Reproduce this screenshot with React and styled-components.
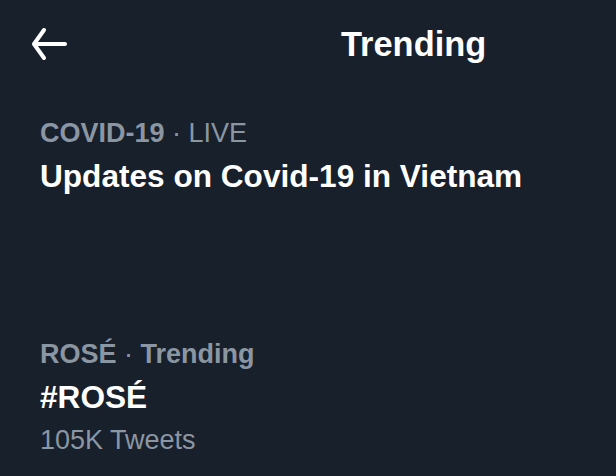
import React from 'react'
import styled, {createGlobalStyle} from 'styled-components'

const GlobalStyle = createGlobalStyle`
    html, body {
        margin: 0;
        padding: 0;
        background: #18202b;
    }
    body {
        font-family: "Liberation Sans", Arial, sans-serif;
    }
`

const Page = styled.div`
    width: 616px;
    height: 476px;
    overflow: hidden;
    background: #18202b;
    color: #ffffff;
`

const Header = styled.header`
    height: 88px;
    display: flex;
    align-items: center;
    padding-left: 28px;
`

const BackButton = styled.button`
    width: 40px;
    height: 40px;
    padding: 0;
    border: none;
    background: none;
    color: #ffffff;
    display: flex;
`

const Title = styled.h1`
    margin: 0 0 0 273px;
    font-size: 34.4px;
    line-height: 34px;
    font-weight: 700;
`

const List = styled.ul`
    list-style: none;
    margin: 0;
    padding: 27px 40px 0;
    display: flex;
    flex-direction: column;
    gap: 135px;
`

const Item = styled.li`
    display: flex;
    flex-direction: column;
`

const Meta = styled.div`
    font-size: 27px;
    line-height: 36px;
    color: #8b96a3;
    white-space: nowrap;
`

const Strong = styled.span`
    font-weight: 700;
`

const Headline = styled.div`
    font-size: 31.6px;
    line-height: 50px;
    font-weight: 700;
    color: #ffffff;
    white-space: nowrap;
`

const Count = styled.div`
    font-size: 27px;
    line-height: 36px;
    color: #8b96a3;
`

function BackArrow() {
    return (
        <svg width="40" height="40" viewBox="0 0 40 40" fill="none" stroke="currentColor"
             strokeWidth="4" strokeLinecap="round" strokeLinejoin="round">
            <path d="M16 6 L6 20 L16 34" />
            <path d="M6.5 20 H37" />
        </svg>
    )
}

const trends = [
    {topic: 'COVID-19', context: 'LIVE', contextBold: false, title: 'Updates on Covid-19 in Vietnam'},
    {topic: 'ROSÉ', context: 'Trending', contextBold: true, title: '#ROSÉ', count: '105K Tweets'},
]

export default function App() {
    return (
        <Page>
            <GlobalStyle />
            <Header>
                <BackButton aria-label="Back"><BackArrow /></BackButton>
                <Title>Trending</Title>
            </Header>
            <List>
                {trends.map(el => (
                    <Item key={el.title}>
                        <Meta>
                            <Strong>{el.topic}</Strong> · {el.contextBold ? <Strong>{el.context}</Strong> : el.context}
                        </Meta>
                        <Headline>{el.title}</Headline>
                        {el.count && <Count>{el.count}</Count>}
                    </Item>
                ))}
            </List>
        </Page>
    )
}
